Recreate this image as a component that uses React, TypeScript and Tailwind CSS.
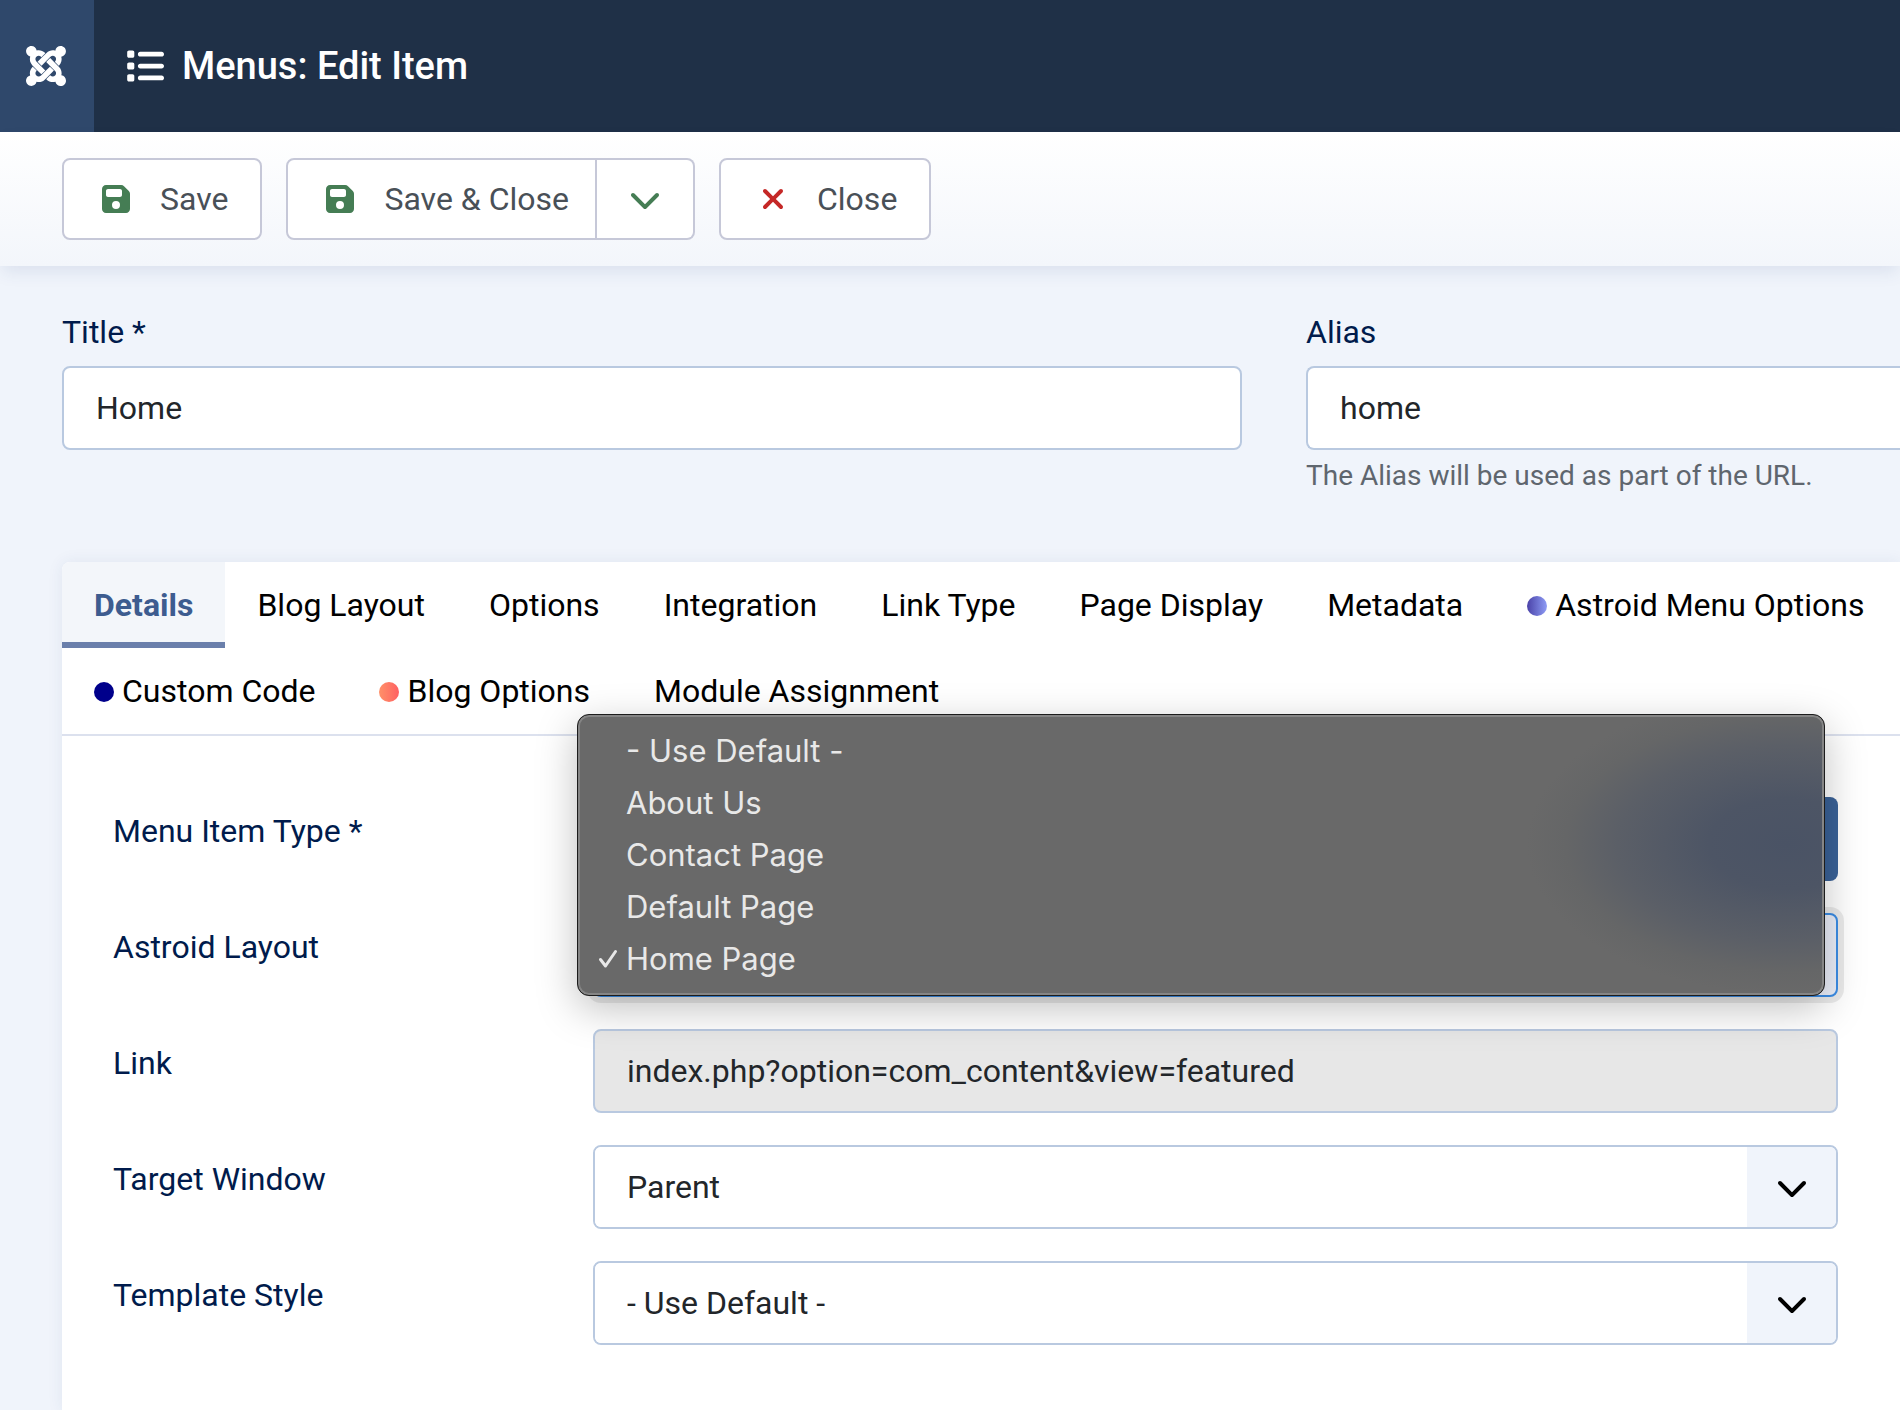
import type { ReactNode } from "react";
import { SiJoomla } from "react-icons/si";
import { FaChevronDown, FaFloppyDisk, FaList, FaXmark } from "react-icons/fa6";

interface Tab {
  title: string;
  dot?: string;
  active?: boolean;
}

interface FormRowProps {
  id: string;
  label: string;
  children: ReactNode;
}

interface SelectBoxProps {
  id: string;
  options: string[];
}

const tabs: Tab[] = [
  { title: "Details", active: true },
  { title: "Blog Layout" },
  { title: "Options" },
  { title: "Integration" },
  { title: "Link Type" },
  { title: "Page Display" },
  { title: "Metadata" },
  { title: "Astroid Menu Options", dot: "bg-linear-to-r from-[#4b42a8] to-[#8f9cf5]" },
  { title: "Custom Code", dot: "bg-[#00008b]" },
  { title: "Blog Options", dot: "bg-linear-to-r from-[#ff9068] to-[#ff5f62]" },
  { title: "Module Assignment" },
];

const layouts = ["- Use Default -", "About Us", "Contact Page", "Default Page", "Home Page"];

const field = "block h-[84px] w-full rounded-lg border-2 border-[#b9c9e0] bg-white px-8 text-[#22262a]";
const button = "flex h-[82px] items-center gap-7 border-2 border-[#c6c8d8] bg-white pl-9 pr-8 text-[#495057]";

export default function App() {
  return (
    <div className="min-h-screen overflow-hidden bg-[#f0f4fb] font-['Roboto',sans-serif] text-[32px] leading-[48px]">
      <header className="flex h-[132px] items-center bg-[#1f3047] text-white">
        <a href="#" aria-label="Joomla" className="flex h-full w-[94px] items-center justify-center bg-[#2f486b] pr-0.5">
          <SiJoomla size={40} />
        </a>
        <h1 className="flex items-center gap-[18px] pl-8 text-[38px] font-medium">
          <FaList size={38} />
          Menus: Edit Item
        </h1>
      </header>

      <Toolbar />

      <main className="pl-[62px] pt-[42px]">
        <div className="flex gap-16">
          <div className="w-[1180px] shrink-0">
            <label htmlFor="title" className="mb-2.5 block text-[#001b4c]">Title *</label>
            <input id="title" type="text" defaultValue="Home" className={field} />
          </div>
          <div className="min-w-0 flex-1">
            <label htmlFor="alias" className="mb-2.5 block text-[#001b4c]">Alias</label>
            <input
              id="alias"
              type="text"
              defaultValue="home"
              className="block h-[84px] w-full rounded-l-lg border-2 border-r-0 border-[#b9c9e0] bg-white px-8 text-[#22262a]"
            />
            <p className="mt-1 whitespace-nowrap text-[28px] leading-[44px] text-[#5f666e]">
              The Alias will be used as part of the URL.
            </p>
          </div>
        </div>

        <section className="mt-16 rounded-tl-lg bg-white shadow-[0_0_16px_rgba(40,60,110,0.08)]">
          <div role="tablist" className="flex flex-wrap border-b-2 border-[#dce1ee]">
            {tabs.map(tab => (
              <TabButton key={tab.title} {...tab} />
            ))}
          </div>

          <div className="flex flex-col gap-8 pb-[66px] pl-[51px] pr-[62px] pt-[61px]">
            <FormRow id="type" label="Menu Item Type *">
              <div className="flex">
                <input
                  id="type"
                  readOnly
                  className="h-[84px] min-w-0 flex-1 rounded-l-lg border-2 border-[#b9c9e0] bg-white px-8"
                />
                <button type="button" aria-label="Select" className="h-[84px] w-[180px] rounded-r-lg bg-[#3a6298]" />
              </div>
            </FormRow>
            <FormRow id="layout" label="Astroid Layout">
              <select
                id="layout"
                defaultValue="Home Page"
                className="block h-[84px] w-full appearance-none rounded-lg border-2 border-[#3b8de6] bg-[#ebeffa] px-8 shadow-[0_0_0_6px_rgba(0,0,0,0.08)]"
              >
                {layouts.map(name => <option key={name}>{name}</option>)}
              </select>
              <LayoutMenu />
            </FormRow>
            <FormRow id="link" label="Link">
              <input
                id="link"
                readOnly
                value="index.php?option=com_content&view=featured"
                className="block h-[84px] w-full rounded-lg border-2 border-[#b9c9e0] bg-[#e7e7e7] px-8 text-[#22262a]"
              />
            </FormRow>
            <FormRow id="target" label="Target Window">
              <SelectBox id="target" options={["Parent", "New Window With Navigation"]} />
            </FormRow>
            <FormRow id="style" label="Template Style">
              <SelectBox id="style" options={["- Use Default -"]} />
            </FormRow>
          </div>
        </section>
      </main>
    </div>
  );
}

function Toolbar() {
  return (
    <div className="relative flex gap-6 bg-linear-to-b from-white to-[#f3f6fb] px-[62px] py-[26px] shadow-[0_8px_16px_-2px_rgba(40,70,130,0.1)]">
      <button type="button" className={`${button} rounded-lg`}>
        <FaFloppyDisk size={32} className="text-[#457d54]" />
        Save
      </button>
      <div className="flex">
        <button type="button" className={`${button} rounded-l-lg pr-[26px]`}>
          <FaFloppyDisk size={32} className="text-[#457d54]" />
          Save &amp; Close
        </button>
        <button
          type="button"
          aria-label="More save options"
          className="flex w-[98px] items-center justify-center rounded-r-lg border-2 border-l-0 border-[#c6c8d8] bg-white"
        >
          <FaChevronDown size={32} className="text-[#457d54]" />
        </button>
      </div>
      <button type="button" className={`${button} rounded-lg`}>
        <FaXmark size={32} className="text-[#c52827]" />
        Close
      </button>
    </div>
  );
}

function TabButton({ title, dot, active }: Tab) {
  return (
    <button
      type="button"
      role="tab"
      aria-selected={!!active}
      className={
        active
          ? "flex h-[86px] items-center rounded-tl-lg bg-[#f3f6fa] px-8 font-bold text-[#3d5c8f] shadow-[inset_0_-6px_0_#6a7fab]"
          : "flex h-[86px] items-center gap-2 px-8 text-black"
      }
    >
      {dot && <span className={`mt-0.5 size-5 rounded-full ${dot}`} />}
      {title}
    </button>
  );
}

function FormRow({ id, label, children }: FormRowProps) {
  return (
    <div className="flex">
      <label htmlFor={id} className="w-[480px] shrink-0 pt-2.5 text-[#001b4c]">{label}</label>
      <div className="relative min-w-0 flex-1">{children}</div>
    </div>
  );
}

function SelectBox({ id, options }: SelectBoxProps) {
  return (
    <div className="flex h-[84px] overflow-hidden rounded-lg border-2 border-[#b9c9e0] bg-white">
      <select id={id} className="min-w-0 flex-1 appearance-none bg-white px-8 text-[#22262a]">
        {options.map(option => <option key={option}>{option}</option>)}
      </select>
      <span className="pointer-events-none flex w-[89px] items-center justify-center bg-[#f0f4fb]">
        <FaChevronDown size={32} className="text-black" />
      </span>
    </div>
  );
}

// Open option list of the layout select, drawn over the form
function LayoutMenu() {
  return (
    <ul
      role="listbox"
      aria-label="Astroid Layout"
      className="absolute bottom-px left-[-16px] right-[13px] z-10 rounded-xl border border-[#1c1c1c] bg-[#696969] bg-[radial-gradient(260px_150px_at_97%_46%,#4a5365_0%,#4d5565_30%,#5b5f67_65%,#656667_85%,#696969_100%)] py-2.5 font-['Inter',sans-serif] text-[31px] leading-[52px] text-[#e8e8e8] shadow-[inset_0_0_0_2px_#858585,0_12px_40px_rgba(0,0,0,0.25)]"
    >
      {layouts.map(name => (
        <li key={name} role="option" aria-selected={name === "Home Page"} className="flex items-center pl-5">
          <span className="w-7 shrink-0">{name === "Home Page" && <CheckIcon />}</span>
          {name}
        </li>
      ))}
    </ul>
  );
}

function CheckIcon() {
  return (
    <svg width="20" height="20" viewBox="0 0 20 20" fill="none" stroke="currentColor" strokeWidth="3" strokeLinecap="round" strokeLinejoin="round">
      <path d="M2.5 10.5 7.5 17 17.500 2.500" />
    </svg>
  );
}
